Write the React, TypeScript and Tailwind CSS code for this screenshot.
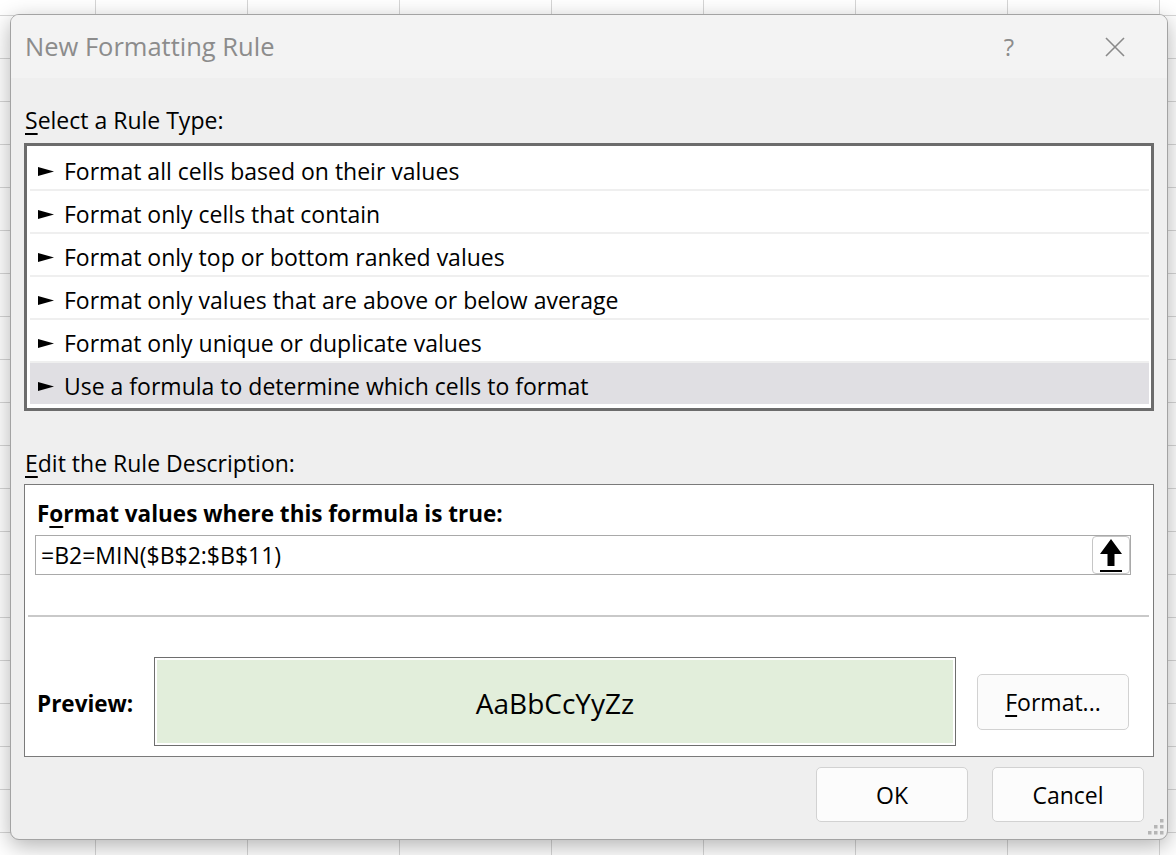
import React from 'react';

const rules = [
  'Format all cells based on their values',
  'Format only cells that contain',
  'Format only top or bottom ranked values',
  'Format only values that are above or below average',
  'Format only unique or duplicate values',
  'Use a formula to determine which cells to format',
];

function Pointer() {
  return (
    <svg width="16" height="9" viewBox="0 0 16 9" className="shrink-0">
      <polygon points="0,0 16,4.5 0,9" fill="#000" />
    </svg>
  );
}

function RuleRow({ label, selected }: { label: string; selected?: boolean }) {
  return (
    <div className={`flex h-[41px] items-center pl-[8px] pt-[6px] ${selected ? 'bg-[#e0dfe3]' : ''}`}>
      <Pointer />
      <span className="ml-[10px] whitespace-nowrap">{label}</span>
    </div>
  );
}

function CollapseIcon() {
  return (
    <svg width="24" height="35" viewBox="0 0 24 35">
      <polygon points="12,1 23,16 15.5,16 15.5,28 8.5,28 8.5,16 1,16" fill="#000" />
      <rect x="1" y="32" width="22" height="2" fill="#000" />
    </svg>
  );
}

function Grip() {
  const dots = [
    [12, 0],
    [6, 6],
    [12, 6],
    [0, 12],
    [6, 12],
    [12, 12],
  ];
  return (
    <svg width="16" height="16" viewBox="0 0 16 16" className="absolute right-[3px] bottom-[4px]">
      {dots.map(([x, y], i) => (
        <rect key={i} x={x} y={y} width="3.5" height="3.5" fill="#b5b5b5" />
      ))}
    </svg>
  );
}

export default function App() {
  return (
    <div
      className="w-[1176px] h-[855px] overflow-hidden bg-white pt-[14px] pl-[10px] font-['Open_Sans',sans-serif] text-black
                 bg-[linear-gradient(to_right,#d6d6d6_1px,transparent_1px),linear-gradient(to_bottom,#d6d6d6_1px,transparent_1px)]
                 bg-size-[152px_43px] bg-position-[95px_15px]"
    >
      <div className="relative flex h-[826px] w-[1158px] flex-col overflow-hidden rounded-[9px] border border-[#a3a3a3] bg-[#efefef] shadow-[0_6px_22px_rgba(0,0,0,0.3)]">
        {/* Title bar */}
        <div className="flex h-[63px] shrink-0 items-center bg-[#f3f3f3] pl-[14px] pr-[42px]">
          <span className="text-[25.5px] text-[#8c8c8c]">New Formatting Rule</span>
          <div className="ml-auto flex items-center">
            <span className="w-[20px] text-center text-[24px] text-[#8c8c8c]">?</span>
            <svg width="20" height="20" viewBox="0 0 20 20" className="ml-[86px]">
              <path d="M1 1 L19 19 M19 1 L1 19" stroke="#8a8a8a" strokeWidth="1.6" />
            </svg>
          </div>
        </div>

        {/* Body */}
        <div className="flex flex-col px-[13px] text-[23px]">
          <div className="mt-[28px] h-[28px] pl-[1px] leading-[28px]">
            <span className="underline underline-offset-[4px]">S</span>elect a Rule Type:
          </div>

          {/* Rule type list */}
          <div className="mt-[9px] h-[268px] border-[3px] border-[#6c6c6c] bg-white pt-[2px] pl-[3px] pr-[2px]">
            {rules.map((r, i) => (
              <React.Fragment key={r}>
                {i > 0 && <div className="h-[2px] bg-[#efefef]" />}
                <RuleRow label={r} selected={i === rules.length - 1} />
              </React.Fragment>
            ))}
          </div>

          <div className="mt-[38px] h-[28px] pl-[1px] leading-[28px]">
            <span className="underline underline-offset-[4px]">E</span>dit the Rule Description:
          </div>

          {/* Rule description */}
          <div className="mt-[7px] flex h-[273px] flex-col border border-[#7a7a7a] bg-white">
            <div className="mt-[15px] h-[28px] pl-[12px] text-[22.5px] font-bold leading-[28px]">
              F<span className="underline underline-offset-[4px]">o</span>rmat values where this formula is true:
            </div>
            <div className="ml-[10px] mt-[7px] flex h-[40px] w-[1096px] items-center border border-[#a9a9a9] pl-[5px]">
              <span className="flex-1">=B2=MIN($B$2:$B$11)</span>
              <button className="flex h-[38px] w-[38px] items-center justify-center rounded-[4px] border border-[#c6c6c6] bg-white">
                <CollapseIcon />
              </button>
            </div>
            <div className="ml-[3px] mr-[4px] mt-[40px] h-[2px] bg-[#c9c9c9]" />
            <div className="mt-[40px] flex items-center pl-[12px]">
              <span className="w-[117px] pt-[4px] text-[22.5px] font-bold">Preview:</span>
              <div className="h-[89px] w-[802px] border border-[#6e6e6e] p-[2px]">
                <div className="flex h-full w-full items-center justify-center bg-[#e2eedb] pt-[2px] text-[28px]">
                  AaBbCcYyZz
                </div>
              </div>
              <button className="ml-[21px] h-[56px] w-[152px] rounded-[5px] border border-[#d2d2d2] bg-[#fbfbfb] pt-[2px]">
                <span className="underline underline-offset-[4px]">F</span>ormat...
              </button>
            </div>
          </div>

          {/* Dialog buttons */}
          <div className="mt-[10px] flex justify-end gap-[24px] pr-[10px]">
            <button className="h-[55px] w-[152px] rounded-[5px] border border-[#d2d2d2] bg-[#fcfcfc] pt-[2px]">OK</button>
            <button className="h-[55px] w-[152px] rounded-[5px] border border-[#d2d2d2] bg-[#fcfcfc] pt-[2px]">Cancel</button>
          </div>
        </div>

        <Grip />
      </div>
    </div>
  );
}
